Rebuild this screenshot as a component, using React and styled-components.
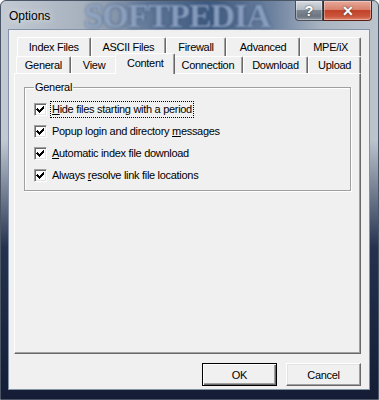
import React from 'react';
import styled, { createGlobalStyle } from 'styled-components';

const Global = createGlobalStyle`
  html, body { margin: 0; padding: 0; background: #fff; }
  * { box-sizing: border-box; }
`;

const Window = styled.div`
  width: 379px;
  height: 400px;
  display: flex;
  flex-direction: column;
  padding: 0 8px 9px 7px;
  border-radius: 6px 6px 0 0;
  border: 1px solid #4a5566;
  background:
    linear-gradient(180deg, rgba(0,0,0,0) 0%, rgba(0,0,0,0) 35%, #24324f 62%, #141d35 100%),
    linear-gradient(90deg, #c3cad3 0%, #a6b1be 22%, #5f7696 40%, #3f5a80 55%, #6d82a0 72%, #aab5c2 85%, #bcc4cd 100%);
  font-family: "Liberation Sans", Arial, sans-serif;
`;

const TitleBar = styled.div`
  height: 28px;
  flex: none;
  display: flex;
  align-items: flex-start;
  margin: 0 -8px 0 -7px;
  padding-left: 8px;
`;

const Caption = styled.span`
  font-size: 12px;
  color: #000;
  margin-top: 8px;
  flex: none;
  text-shadow: 0 0 6px rgba(255,255,255,0.9);
`;

const Watermark = styled.span`
  flex: none;
  white-space: nowrap;
  margin-left: 34px;
  margin-top: 1px;
  font-family: "Liberation Serif", serif;
  font-weight: bold;
  font-size: 34px;
  line-height: 28px;
  letter-spacing: -1px;
  color: rgba(175, 195, 222, 0.7);
  text-shadow: 0 0 3px rgba(25, 50, 95, 0.8);
  filter: blur(0.9px);
`;

const CapButtons = styled.div`
  margin-left: auto;
  margin-right: 6px;
  display: flex;
  flex: none;
`;

const CapButton = styled.div`
  width: ${p => p.$w}px;
  height: 20px;
  display: flex;
  align-items: center;
  justify-content: center;
  color: #fff;
  font-weight: bold;
  font-size: 14px;
  border: 1px solid ${p => (p.$red ? '#5b1c14' : '#4a4f57')};
  border-top: none;
  border-radius: ${p => (p.$red ? '0 0 4px 0' : '0 0 0 4px')};
  background: ${p =>
    p.$red
      ? 'linear-gradient(180deg, #e8a899 0%, #d8826d 45%, #c2422a 50%, #c9553b 80%, #e0836a 100%)'
      : 'linear-gradient(180deg, #d6dbe1 0%, #b3bac3 45%, #7d8793 50%, #6d7680 80%, #8e98a3 100%)'};
  box-shadow: inset 0 0 0 1px rgba(255,255,255,0.35);
  text-shadow: 0 0 2px #333;
`;

const Client = styled.div`
  flex: 1;
  background: #f0f0f0;
  border: 1px solid #8392a8;
  padding: 7px 8px 0 5px;
  display: flex;
  flex-direction: column;
  font-size: 11px;
  letter-spacing: -0.3px;
  color: #000;
`;

const TabRow = styled.div`
  display: flex;
  align-items: flex-start;
  height: ${p => p.$h}px;
  margin-left: ${p => p.$indent}px;
  position: relative;
  z-index: ${p => p.$z};
`;

const Tab = styled.div`
  width: ${p => p.$w + (p.$active ? 4 : 0)}px;
  height: ${p => (p.$active ? 21 : p.$h)}px;
  margin: ${p => (p.$active ? '-3px -2px 0' : '0')};
  position: relative;
  z-index: ${p => (p.$active ? 3 : 1)};
  display: flex;
  align-items: center;
  justify-content: center;
  padding-bottom: ${p => (p.$active ? 2 : 0)}px;
  background: #f0f0f0;
  border-top: 1px solid #fff;
  border-left: 1px solid #fff;
  border-right: 1px solid #696969;
  border-radius: 2px 2px 0 0;
  box-shadow: inset -1px 0 0 #a0a0a0;
  white-space: nowrap;
`;

const Panel = styled.div`
  height: 281px;
  flex: none;
  background: #f0f0f0;
  border-top: 1px solid #fff;
  border-left: 1px solid #fff;
  border-right: 1px solid #696969;
  border-bottom: 1px solid #696969;
  box-shadow: inset -1px -1px 0 #a0a0a0;
  padding: 7px 9px;
  position: relative;
  z-index: 2;
`;

const Group = styled.fieldset`
  margin: 0;
  padding: 0 0 4px 9px;
  border: 1px solid #a0a0a0;
  box-shadow: 1px 1px 0 #fff, inset 1px 1px 0 #fff;
`;

const Legend = styled.legend`
  padding: 0 1px;
  line-height: 13px;
`;

const List = styled.div`
  display: flex;
  flex-direction: column;
  padding-top: 4px;
`;

const Row = styled.div`
  height: 22px;
  display: flex;
  align-items: center;
  gap: 3px;
`;

const Box = styled.span`
  width: 13px;
  height: 13px;
  flex: none;
  background: #fff;
  border-top: 1px solid #a0a0a0;
  border-left: 1px solid #a0a0a0;
  border-right: 1px solid #fff;
  border-bottom: 1px solid #fff;
  box-shadow: inset 1px 1px 0 #696969, inset -1px -1px 0 #e3e3e3;
  display: flex;
  align-items: center;
  justify-content: center;
`;

const Label = styled.span`
  padding: 1px 1px 2px;
  border: 1px dotted ${p => (p.$focus ? '#000' : 'transparent')};
  white-space: nowrap;
`;

const Buttons = styled.div`
  display: flex;
  justify-content: flex-end;
  gap: 9px;
  margin-top: 9px;
`;

const Button = styled.button`
  width: 75px;
  height: 23px;
  font-family: inherit;
  font-size: 11px;
  letter-spacing: inherit;
  color: #000;
  background: #f0f0f0;
  padding: 0;
  border: 1px solid;
  border-color: ${p => (p.$default ? '#000' : '#fff #696969 #696969 #fff')};
  box-shadow: ${p =>
    p.$default
      ? 'inset 1px 1px 0 #fff, inset -1px -1px 0 #696969, inset -2px -2px 0 #a0a0a0'
      : 'inset -1px -1px 0 #a0a0a0, inset 1px 1px 0 #e3e3e3'};
`;

const Check = () => (
  <svg width="9" height="9" viewBox="0 0 9 9" shapeRendering="crispEdges">
    <path d="M1 3h1v1h1v1h1v-1h1v-1h1v-1h1v-1h1v3h-1v1h-1v1h-1v1h-1v1h-1v-1h-1v-1h-1v-1h-1z" fill="#000" />
  </svg>
);

const backTabs = [
  ['Index Files', 74],
  ['ASCII Files', 76],
  ['Firewall', 60],
  ['Advanced', 75],
  ['MPE/iX', 61],
];

const frontTabs = [
  ['General', 55],
  ['View', 47],
  ['Content', 56],
  ['Connection', 70],
  ['Download', 66],
  ['Upload', 53],
];

const options = [
  [<><u>H</u>ide files starting with a period</>, true],
  [<>Popup login and directory <u>m</u>essages</>, false],
  [<><u>A</u>utomatic index file download</>, false],
  [<>Always <u>r</u>esolve link file locations</>, false],
];

export default function App() {
  return (
    <>
      <Global />
      <Window>
        <TitleBar>
          <Caption>Options</Caption>
          <Watermark>SOFTPEDIA</Watermark>
          <CapButtons>
            <CapButton $w={28}>?</CapButton>
            <CapButton $w={49} $red>✕</CapButton>
          </CapButtons>
        </TitleBar>
        <Client>
          <TabRow $h={19} $indent={3} $z={1}>
            {backTabs.map(([t, w]) => (
              <Tab key={t} $w={w} $h={19}>{t}</Tab>
            ))}
          </TabRow>
          <TabRow $h={17} $indent={2} $z={3}>
            {frontTabs.map(([t, w]) => (
              <Tab key={t} $w={w} $h={17} $active={t === 'Content'}>{t}</Tab>
            ))}
          </TabRow>
          <Panel>
            <Group>
              <Legend>General</Legend>
              <List>
                {options.map(([text, focus], i) => (
                  <Row key={i}>
                    <Box><Check /></Box>
                    <Label $focus={focus}>{text}</Label>
                  </Row>
                ))}
              </List>
            </Group>
          </Panel>
          <Buttons>
            <Button $default>OK</Button>
            <Button>Cancel</Button>
          </Buttons>
        </Client>
      </Window>
    </>
  );
}
